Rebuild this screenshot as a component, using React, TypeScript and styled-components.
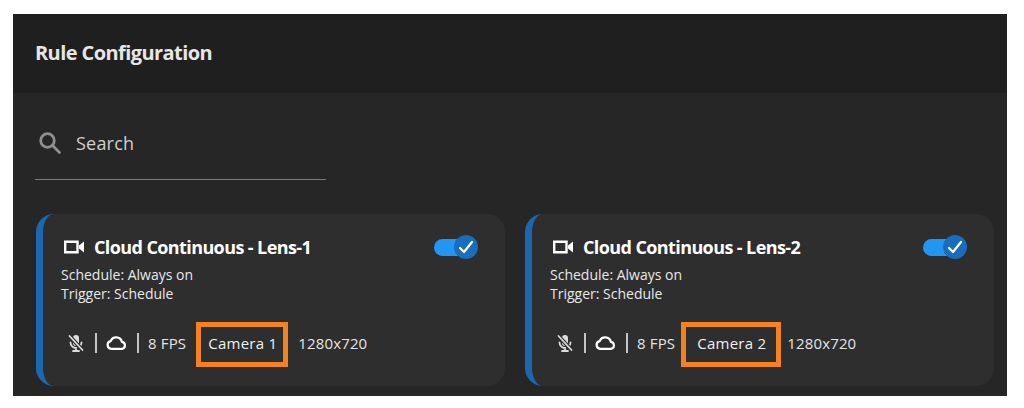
import React from 'react';
import styled, { createGlobalStyle } from 'styled-components';

const rules = [
  { lens: 'Lens-1', camera: 'Camera 1', markLeft: 12, markWidth: 92 },
  { lens: 'Lens-2', camera: 'Camera 2', markLeft: 16, markWidth: 100 },
];

const App: React.FC = () => (
  <>
    <GlobalStyle />
    <Panel>
      <Header>
        <Title>Rule Configuration</Title>
      </Header>
      <Content>
        <SearchBar>
          <svg width="24" height="24" viewBox="0 0 24 24" fill="none" stroke="#8f8f8f" strokeWidth="2.8" strokeLinecap="round">
            <circle cx="9.5" cy="9.5" r="6.8" />
            <path d="M14.8 14.8 L21.5 21.5" />
          </svg>
          <SearchText>Search</SearchText>
        </SearchBar>
        <CardGrid>
          {rules.map((rule) => (
            <Card key={rule.lens}>
              <CardHead>
                <CardTitle>
                  <svg width="21" height="14" viewBox="0 0 21 14">
                    <path d="M1.2 1.8 H13.5 V12.2 H1.2 Z" fill="none" stroke="#fff" strokeWidth="2.4" />
                    <path d="M15 5.5 L20 1.5 V12.5 L15 8.5 Z" fill="#fff" />
                  </svg>
                  <span>Cloud Continuous - {rule.lens}</span>
                </CardTitle>
                <Toggle>
                  <Track />
                  <Knob>
                    <svg width="16" height="14" viewBox="0 0 16 14" fill="none" stroke="#fff" strokeWidth="2.2" strokeLinecap="round" strokeLinejoin="round">
                      <path d="M2 8 L6 12 L14 2" />
                    </svg>
                  </Knob>
                </Toggle>
              </CardHead>
              <Details>
                <div>Schedule: Always on</div>
                <div>Trigger: Schedule</div>
              </Details>
              <InfoRow>
                <MicIcon width="16" height="18" viewBox="0 0 16 18" fill="none" stroke="#dcdcdc" strokeWidth="1.8" strokeLinecap="round">
                  <rect x="5" y="1" width="6" height="11" rx="3" fill="#dcdcdc" stroke="none" />
                  <path d="M2.5 8.5 a5.5 5.5 0 0 0 5.5 5.5 V16.5 M5 17 H11" />
                  <path d="M13.5 8.5 a5.5 5.5 0 0 1 -1 3" />
                  <path d="M1 1.5 L15 16.5" stroke="#2e2e2e" strokeWidth="4" />
                  <path d="M1.5 2 L14.5 16" strokeWidth="1.8" />
                </MicIcon>
                <Divider />
                <svg width="22" height="14" viewBox="0 0 22 14" fill="none" stroke="#fff" strokeWidth="2.2" strokeLinejoin="round">
                  <path d="M5.2 12.8 a3.9 3.9 0 0 1 -0.5 -7.7 a5.9 5.9 0 0 1 11.2 0.8 a3.5 3.5 0 0 1 0.2 6.9 Z" />
                </svg>
                <Divider />
                <InfoText>8 FPS</InfoText>
                <CameraLabel>
                  {rule.camera}
                  <Highlight $left={rule.markLeft} $width={rule.markWidth} />
                </CameraLabel>
                <InfoText>1280x720</InfoText>
              </InfoRow>
            </Card>
          ))}
        </CardGrid>
      </Content>
    </Panel>
  </>
);

const GlobalStyle = createGlobalStyle`
  html, body {
    margin: 0;
    background: #fff;
  }
  body {
    padding: 14px 17px 12px 13px;
    font-family: 'Open Sans', 'Liberation Sans', sans-serif;
  }
`;

const Panel = styled.div`
  height: 382px;
  background: #262626;
  display: flex;
  flex-direction: column;
`;

const Header = styled.div`
  height: 79px;
  padding: 0 0 3px 22px;
  box-sizing: border-box;
  background: #1f1f1f;
  display: flex;
  align-items: center;
`;

const Title = styled.div`
  color: #e6e6e6;
  font-size: 20px;
  font-weight: 700;
  letter-spacing: -0.58px;
`;

const Content = styled.div`
  flex: 1;
  padding: 0 13px 10px 22px;
  display: flex;
  flex-direction: column;
`;

const SearchBar = styled.div`
  width: 291px;
  height: 87px;
  padding: 14px 0 0 3px;
  box-sizing: border-box;
  border-bottom: 1px solid #7a7a7a;
  display: flex;
  align-items: center;
  gap: 14px;
`;

const SearchText = styled.div`
  color: #cfcfcf;
  font-size: 18px;
  letter-spacing: 0.2px;
`;

const CardGrid = styled.div`
  margin: 34px 0 0 1px;
  flex: 1;
  display: grid;
  grid-template-columns: 469px 469px;
  gap: 20px;
`;

const Card = styled.div`
  background: #2e2e2e;
  border-left: 7px solid #1b68b0;
  border-radius: 18px;
  padding: 19px 27px 0 18px;
`;

const CardHead = styled.div`
  height: 28px;
  display: flex;
  align-items: center;
  justify-content: space-between;
`;

const CardTitle = styled.div`
  padding-left: 3px;
  color: #fff;
  font-size: 18px;
  font-weight: 700;
  letter-spacing: -0.6px;
  display: flex;
  align-items: center;
  gap: 9px;
`;

const Toggle = styled.div`
  position: relative;
  width: 44px;
  height: 24px;
`;

const Track = styled.div`
  position: absolute;
  left: 0;
  top: 4px;
  width: 34px;
  height: 17px;
  border-radius: 9px;
  background: #2196f3;
`;

const Knob = styled.div`
  position: absolute;
  right: 0;
  top: 0;
  width: 24px;
  height: 24px;
  border-radius: 50%;
  background: #1a6cbc;
  display: flex;
  align-items: center;
  justify-content: center;
`;

const Details = styled.div`
  margin-top: 4px;
  color: #e8e8e8;
  font-size: 14px;
  line-height: 19px;
`;

const InfoRow = styled.div`
  margin-top: 30px;
  padding-left: 7px;
  height: 20px;
  display: flex;
  align-items: center;
  gap: 9px;
`;

const MicIcon = styled.svg`
  margin-right: 2px;
`;

const Divider = styled.div`
  width: 2px;
  height: 20px;
  background: #c4c4c4;
`;

const InfoText = styled.div`
  color: #e4e4e4;
  font-size: 15px;
  letter-spacing: 0.15px;
`;

const CameraLabel = styled.div`
  position: relative;
  margin: 0 12px 0 13px;
  color: #f0f0f0;
  font-size: 15px;
  letter-spacing: 0.25px;
`;

// orange annotation box, not the same width on each card
const Highlight = styled.div<{ $left: number; $width: number }>`
  position: absolute;
  top: -11px;
  left: -${(p) => p.$left}px;
  width: ${(p) => p.$width}px;
  height: 45px;
  box-sizing: border-box;
  border: 5px solid #f58220;
`;

export default App;
